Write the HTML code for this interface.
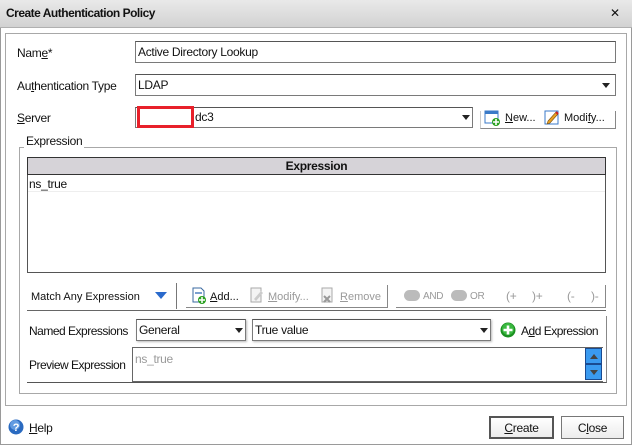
<!DOCTYPE html>
<html><head><meta charset="utf-8"><style>
*{box-sizing:border-box;margin:0;padding:0}
body{width:632px;height:445px;overflow:hidden;background:#fff;font-family:"Liberation Sans","DejaVu Sans",sans-serif;font-size:12px;color:#111;position:relative;letter-spacing:-0.3px}
.a{position:absolute}
.t{position:absolute;white-space:nowrap;line-height:14px}
.inp{position:absolute;border:1px solid #7a7a7a;background:#fff;border-top-color:#555}
.arr{position:absolute;width:0;height:0;border-left:4px solid transparent;border-right:4px solid transparent;border-top:5px solid #222}
u{text-decoration:underline}
.g{color:#9a9a9a}
</style></head><body>
<div class="a" style="left:0;top:0;width:632px;height:445px;border:1px solid #9a9a9a"></div>
<div class="a" style="left:0;top:0;width:632px;height:28px;background:linear-gradient(#e9e9e9,#d2d2d2);border-bottom:1px solid #b0b0b0"></div>
<div class="t" style="left:6px;top:6px;font-weight:bold;font-size:12px;letter-spacing:-0.5px">Create Authentication Policy</div>
<div class="t" style="left:610px;top:6px;font-weight:bold;font-size:12px">✕</div>
<div class="a" style="left:5px;top:33px;width:622px;height:373px;border:1px solid #a8a8a8"></div>

<div class="t" style="left:17px;top:46px">Nam<u>e</u>*</div>
<div class="inp" style="left:135px;top:41px;width:481px;height:22px"></div>
<div class="t" style="left:138px;top:45px">Active Directory Lookup</div>

<div class="t" style="left:17px;top:79px">Au<u>t</u>hentication Type</div>
<div class="inp" style="left:135px;top:74px;width:481px;height:22px"></div>
<div class="t" style="left:138px;top:78px">LDAP</div>
<div class="arr" style="left:602px;top:83px"></div>

<div class="t" style="left:17px;top:111px"><u>S</u>erver</div>
<div class="inp" style="left:135px;top:107px;width:338px;height:21px"></div>
<div class="a" style="left:137px;top:106px;width:57px;height:22px;border:3px solid #e8202a;background:#fff"></div>
<div class="t" style="left:195px;top:110px">dc3</div>
<div class="arr" style="left:462px;top:115px"></div>
<div class="a" style="left:480px;top:111px;width:136px;height:18px;border-right:1px solid #888;border-bottom:1px solid #888;border-left:1px solid #ccc"></div>
<svg class="a" style="left:484px;top:109px" width="17" height="17"><rect x="1" y="2" width="13" height="12" fill="#fff" stroke="#3a7ac8"/><rect x="1" y="2" width="13" height="3" fill="#3a7ac8"/><circle cx="12" cy="13" r="4" fill="#2aa020"/><path d="M12 10v6M9 13h6" stroke="#fff" stroke-width="1.6"/></svg>
<div class="t" style="left:505px;top:111px;font-size:11px;letter-spacing:0"><u>N</u>ew...</div>
<svg class="a" style="left:544px;top:109px" width="16" height="16"><rect x="1" y="2" width="13" height="13" fill="#fff" stroke="#3a7ac8"/><path d="M4 12l8-9 2 2-8 9-3 1z" fill="#e8a020" stroke="#7a5010" stroke-width=".6"/><path d="M12 3l2 2" stroke="#d02020" stroke-width="2"/></svg>
<div class="t" style="left:564px;top:111px;font-size:11px;letter-spacing:0">Modi<u>f</u>y...</div>

<div class="a" style="left:19px;top:147px;width:598px;height:247px;border:1px solid #a8a8a8"></div>
<div class="t" style="left:24px;top:134px;background:#fff;padding:0 2px">Expression</div>

<div class="a" style="left:27px;top:157px;width:579px;height:116px;border:1px solid #555"></div>
<div class="a" style="left:27px;top:157px;width:579px;height:18px;background:#d6d3d8;border:1px solid #333"></div>
<div class="t" style="left:27px;top:159px;width:579px;text-align:center;font-weight:bold">Expression</div>
<div class="t" style="left:29px;top:177px">ns_true</div>
<div class="a" style="left:28px;top:191px;width:577px;height:1px;background:#eee"></div>

<div class="a" style="left:27px;top:283px;width:150px;height:26px;border-right:1px solid #777"></div>
<div class="a" style="left:27px;top:310px;width:579px;height:1px;background:#666"></div>
<div class="a" style="left:186px;top:285px;width:202px;height:23px;border-right:1px solid #888;border-bottom:1px solid #888"></div>
<div class="a" style="left:396px;top:285px;width:210px;height:23px;border-right:1px solid #888;border-bottom:1px solid #888"></div>
<div class="t" style="left:31px;top:290px;font-size:11px;letter-spacing:0">Match Any Expression</div>
<svg class="a" style="left:155px;top:292px" width="12" height="8"><path d="M0 0h12L6 7z" fill="#2a6acc"/></svg>
<svg class="a" style="left:191px;top:287px" width="16" height="17"><path d="M2 1h8l3 3v11H2z" fill="#fff" stroke="#3a6aa0"/><rect x="4" y="5" width="7" height="2" fill="#7aa0d0"/><circle cx="11" cy="13" r="4" fill="#2aa020"/><path d="M11 10v6M8 13h6" stroke="#fff" stroke-width="1.5"/></svg>
<div class="t" style="left:210px;top:290px;font-size:11px;letter-spacing:0"><u>A</u>dd...</div>
<svg class="a" style="left:249px;top:287px" width="16" height="17"><path d="M2 1h10v14H2z" fill="#f4f4f4" stroke="#aaa"/><path d="M5 12l7-8 2 2-7 8z" fill="#ccc"/></svg>
<div class="t g" style="left:268px;top:290px;font-size:11px;letter-spacing:0"><u>M</u>odify...</div>
<svg class="a" style="left:320px;top:287px" width="16" height="17"><path d="M2 1h10v14H2z" fill="#f4f4f4" stroke="#aaa"/><path d="M4 9l6 6M10 9l-6 6" stroke="#999" stroke-width="2"/></svg>
<div class="t g" style="left:340px;top:290px;font-size:11px;letter-spacing:0"><u>R</u>emove</div>
<div class="a" style="left:404px;top:290px;width:16px;height:11px;border-radius:6px;background:#bbb"></div>
<div class="t g" style="left:423px;top:290px;font-size:10px">AND</div>
<div class="a" style="left:451px;top:290px;width:16px;height:11px;border-radius:6px;background:#bbb"></div>
<div class="t g" style="left:470px;top:290px;font-size:10px">OR</div>
<div class="t g" style="left:506px;top:289px">(+</div>
<div class="t g" style="left:532px;top:289px">)+</div>
<div class="t g" style="left:567px;top:289px">(-</div>
<div class="t g" style="left:591px;top:289px">)-</div>

<div class="a" style="left:27px;top:316px;width:580px;height:67px;border-right:1px solid #888;border-bottom:1px solid #555"></div>
<div class="t" style="left:29px;top:324px;letter-spacing:-0.5px">Named Expressions</div>
<div class="inp" style="left:136px;top:319px;width:110px;height:22px;box-shadow:1px 1px 2px #bbb"></div>
<div class="t" style="left:139px;top:323px">General</div>
<div class="arr" style="left:235px;top:328px"></div>
<div class="inp" style="left:252px;top:319px;width:239px;height:22px;box-shadow:1px 1px 2px #bbb"></div>
<div class="t" style="left:255px;top:323px">True value</div>
<div class="arr" style="left:480px;top:328px"></div>
<svg class="a" style="left:500px;top:322px" width="16" height="16"><circle cx="8" cy="8" r="7.5" fill="#1a9020"/><circle cx="8" cy="7" r="6" fill="#3ab840"/><path d="M8 3.5v9M3.5 8h9" stroke="#fff" stroke-width="2.6"/></svg>
<div class="t" style="left:521px;top:324px;letter-spacing:-0.5px">A<u>d</u>d Expression</div>
<div class="t" style="left:29px;top:358px;letter-spacing:-0.5px">Preview Expression</div>
<div class="a" style="left:132px;top:347px;width:471px;height:35px;border:1px solid #666;border-right:none"></div>
<div class="t g" style="left:135px;top:352px">ns_true</div>
<div class="a" style="left:585px;top:348px;width:17px;height:16px;background:#3a9af0;border:1px solid #1a4a90"><div class="a" style="left:4px;top:5px;border-left:4px solid transparent;border-right:4px solid transparent;border-bottom:5px solid #444"></div></div>
<div class="a" style="left:585px;top:364px;width:17px;height:16px;background:#3a9af0;border:1px solid #1a4a90"><div class="a" style="left:4px;top:5px;border-left:4px solid transparent;border-right:4px solid transparent;border-top:5px solid #444"></div></div>

<svg class="a" style="left:8px;top:419px" width="16" height="16"><circle cx="8" cy="8" r="7.5" fill="#2a6ac0"/><circle cx="7" cy="6" r="5" fill="#7ab0f0" opacity=".7"/><text x="8" y="12" font-size="11" font-weight="bold" fill="#fff" text-anchor="middle" font-family="Liberation Sans">?</text></svg>
<div class="t" style="left:29px;top:421px"><u>H</u>elp</div>
<div class="a" style="left:489px;top:416px;width:65px;height:23px;border:2px solid #555;background:linear-gradient(#fff,#ececec)"></div>
<div class="t" style="left:489px;top:421px;width:65px;text-align:center"><u>C</u>reate</div>
<div class="a" style="left:561px;top:416px;width:63px;height:23px;border:1px solid #777;background:linear-gradient(#fff,#ececec)"></div>
<div class="t" style="left:561px;top:421px;width:63px;text-align:center">C<u>l</u>ose</div>
</body></html>
